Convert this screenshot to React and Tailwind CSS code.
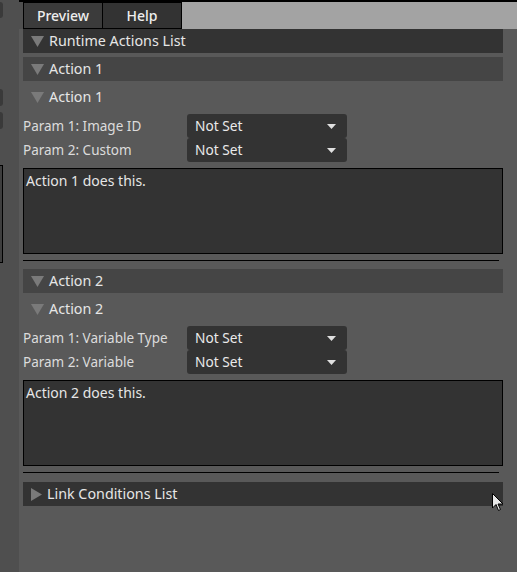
import React from "react";

const font = { fontFamily: '"Noto Sans", "DejaVu Sans", sans-serif' };

function Down() {
  return (
    <svg width="13" height="11" viewBox="0 0 13 11" className="shrink-0">
      <polygon points="0,0 13,0 6.5,11" fill="#7a7a7a" />
    </svg>
  );
}
function Right() {
  return (
    <svg width="11" height="13" viewBox="0 0 11 13" className="shrink-0">
      <polygon points="0,0 11,6.5 0,13" fill="#7a7a7a" />
    </svg>
  );
}

function Header({ title, bg, open = true }) {
  return (
    <div className={`flex h-[24px] items-center gap-[5px] pl-[8px] ${bg}`}>
      {open ? <Down /> : <Right />}
      <span className="text-[14.3px] leading-[18px] text-[#e6e6e6]">{title}</span>
    </div>
  );
}

function Select() {
  return (
    <div className="flex h-[24px] w-[160px] items-center justify-between rounded-[3px] bg-[#333333] pl-[8px] pr-[11px]">
      <span className="text-[13.7px] leading-[18px] text-[#eaeaea]">Not Set</span>
      <svg width="9" height="5" viewBox="0 0 9 5">
        <polygon points="0,0 9,0 4.5,5" fill="#e0e0e0" />
      </svg>
    </div>
  );
}

function Param({ label }) {
  return (
    <div className="flex h-[24px] items-center">
      <span className="w-[164px] text-[13.5px] leading-[18px] text-[#dcdcdc]">{label}</span>
      <Select />
    </div>
  );
}

function Action({ n, p1, p2 }) {
  return (
    <div className="flex flex-col">
      <Header title={`Action ${n}`} bg="bg-[#454545]" />
      <div className="mt-[4px]">
        <Header title={`Action ${n}`} bg="" />
      </div>
      <div className="mt-[5px] flex flex-col">
        <Param label={p1} />
        <Param label={p2} />
      </div>
      <div className="mt-[6px] h-[86px] border border-black bg-[#333333] px-[2px] pt-[3px] text-[14px] leading-[18px] text-[#e6e6e6]">
        Action {n} does this.
      </div>
      <div className="mt-[6px] mr-[4px] h-px bg-black" />
    </div>
  );
}

export default function App() {
  return (
    <div className="relative flex h-[572px] w-[517px] overflow-hidden bg-[#595959]" style={font}>
      <div className="absolute left-0 top-0 h-[2px] w-full bg-black" />
      <div className="relative w-[19px] shrink-0 bg-[#4f4f4f]">
        <div className="absolute left-[-4px] top-[2px] h-[16px] w-[7px] rounded-[3px] bg-[#3a3a3a]" />
        <div className="absolute left-[-4px] top-[89px] h-[17px] w-[7px] rounded-[3px] bg-[#3a3a3a]" />
        <div className="absolute left-[-4px] top-[112px] h-[17px] w-[7px] rounded-[3px] bg-[#3a3a3a]" />
        <div className="absolute left-[-4px] top-[165px] h-[98px] w-[7px] border border-black bg-[#3e3e3e]" />
      </div>
      <div className="flex min-w-0 flex-1 flex-col pt-[2px]">
        <div className="flex h-[27px] bg-[#595959]">
          <div className="w-[4px] bg-[#4f4f4f]" />
          <div className="flex w-[79px] items-center justify-center border border-r-0 border-black bg-[#3b3b3b] text-[14px] font-medium text-[#eeeeee]">
            Preview
          </div>
          <div className="flex w-[80px] items-center justify-center border border-black bg-[#333333] text-[14px] font-medium text-[#eeeeee]">
            Help
          </div>
          <div className="flex-1 bg-[#a3a3a3]" />
        </div>
        <div className="flex flex-col pl-[4px] pr-[14px]">
          <Header title="Runtime Actions List" bg="bg-[#333333]" />
          <div className="mt-[4px]">
            <Action n={1} p1="Param 1: Image ID" p2="Param 2: Custom" />
          </div>
          <div className="mt-[8px]">
            <Action n={2} p1="Param 1: Variable Type" p2="Param 2: Variable" />
          </div>
          <div className="mt-[9px]">
            <Header title="Link Conditions List" bg="bg-[#333333]" open={false} />
          </div>
        </div>
      </div>
      <svg className="absolute left-[492px] top-[493px]" width="12" height="20" viewBox="0 0 12 20">
        <path d="M0.5 0.5 L0.5 15 L4 11.5 L6.5 17.5 L8.5 16.5 L6 11 L11 11 Z" fill="#e8e8e8" stroke="#000" strokeWidth="1" />
      </svg>
    </div>
  );
}
